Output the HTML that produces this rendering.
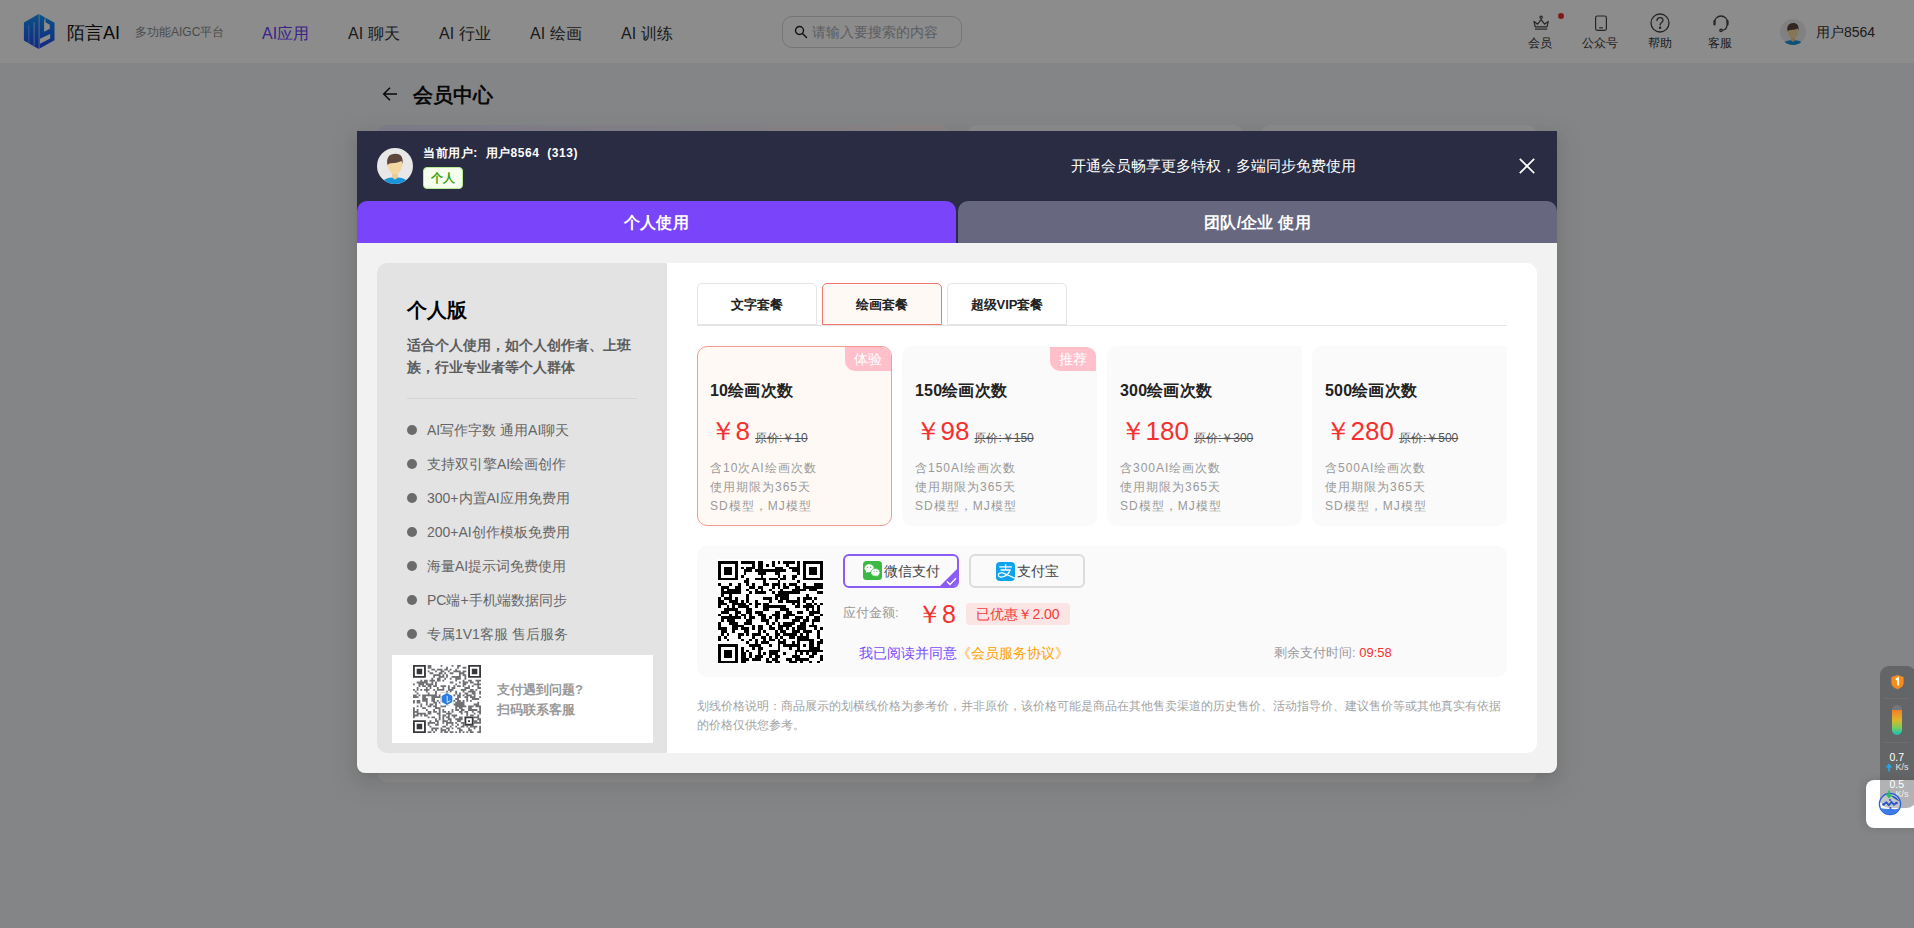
<!DOCTYPE html>
<html lang="zh">
<head>
<meta charset="utf-8">
<title>会员中心</title>
<style>
*{box-sizing:border-box;margin:0;padding:0}
html,body{width:1914px;height:928px;overflow:hidden}
body{font-family:"Liberation Sans",sans-serif;background:#f0f2f5;position:relative;color:#222}
.abs{position:absolute}
/* ---------- page (under overlay) ---------- */
#hdr{position:absolute;left:0;top:0;width:1914px;height:63px;background:#fff}
#hdr .t{position:absolute;white-space:nowrap;line-height:1}
#overlay{position:absolute;left:0;top:0;width:1914px;height:928px;background:rgba(0,0,0,.45)}
.bgcard{position:absolute;background:#fff;border-radius:10px}
/* ---------- modal ---------- */
#modal{position:absolute;left:357px;top:131px;width:1200px;height:642px;background:#f2f2f2;border-radius:0 0 8px 8px;overflow:hidden;box-shadow:0 3px 6px -4px rgba(0,0,0,.12),0 6px 16px 0 rgba(0,0,0,.08),0 9px 28px 8px rgba(0,0,0,.05)}
#mh{position:absolute;left:0;top:0;width:1200px;height:112px;background:#292c42}
.tab{position:absolute;top:70px;height:42px;border-radius:10px 10px 0 0;color:#fff;font-weight:bold;font-size:16px;text-align:center;line-height:43px;letter-spacing:.2px}
#left{position:absolute;left:20px;top:132px;width:290px;height:490px;background:#e3e3e3;border-radius:10px 0 0 10px}
#right{position:absolute;left:310px;top:132px;width:870px;height:490px;background:#fff;border-radius:0 10px 10px 0}
.li{position:absolute;left:30px;font-size:14px;color:#666;white-space:nowrap;line-height:20px;padding-left:20px}
.li:before{content:"";position:absolute;left:0;top:5px;width:10px;height:10px;border-radius:50%;background:#6b6b6b}
.ptab{position:absolute;top:20px;width:120px;height:42px;border:1px solid #e4e4e4;border-radius:5px 5px 0 0;font-size:13px;font-weight:bold;color:#222;text-align:center;line-height:41px;background:#fff}
.card{position:absolute;top:83px;width:195px;height:180px;border-radius:10px;background:#fafafa;overflow:hidden;border:1px solid transparent;background-clip:border-box}
.card .ti{position:absolute;left:12px;top:32.500px;letter-spacing:.2px;font-size:16px;font-weight:bold;color:#222;line-height:22px;white-space:nowrap}
.card .pr{position:absolute;left:11.500px;top:65px;font-size:26px;color:#f5302e;line-height:38px;white-space:nowrap}
.card .op{font-size:12px;color:#555;text-decoration:line-through;margin-left:5px;position:relative;top:2px}
.card .ds{position:absolute;left:12px;top:112px;font-size:12px;color:#999;line-height:19px;letter-spacing:1px;white-space:nowrap}
.badge{position:absolute;right:0;top:0;width:46px;height:24px;background:#ffc0cb;color:#fff;font-size:14px;text-align:center;line-height:24px;border-radius:0 9px 0 10px}
</style>
</head>
<body>
<!-- ================= HEADER ================= -->
<div id="hdr">
  <svg class="abs" style="left:23px;top:13px" width="32" height="37" viewBox="0 0 32 37">
    <defs><linearGradient id="lg" x1="0" y1="0" x2="0" y2="1"><stop offset="0" stop-color="#1795f5"/><stop offset="1" stop-color="#2148ee"/></linearGradient></defs>
    <path d="M15.700 .9L31.500 9.700V27.300L15.700 36.100L.9 27.600V9.500Z" fill="url(#lg)"/>
    <path d="M5.850 12v18.200" stroke="#fff" stroke-opacity=".55" stroke-width=".7" fill="none"/>
    <path d="M11.100 9.200v23.500" stroke="#fff" stroke-opacity=".6" stroke-width="1" fill="none"/>
    <path d="M16.100 .9v35.200" stroke="#fff" stroke-opacity=".75" stroke-width=".8" fill="none"/>
    <path d="M21.900 4.600h.6v4.700l4.300 2.500v3.900l-5.700 3V9z" fill="#fff"/>
    <path d="M17 25.800L27.100 20.900V25.500L17 30.700Z" fill="#fff"/>
  </svg>
  <div class="t" style="left:67px;top:24px;font-size:18px;color:#111;font-weight:500">陌言AI</div>
  <div class="t" style="left:135px;top:26px;font-size:12px;color:#888">多功能AIGC平台</div>
  <div class="t" style="left:262px;top:26px;font-size:16px;color:#6c3ff5">AI应用</div>
  <div class="t" style="left:348px;top:26px;font-size:16px;color:#333">AI 聊天</div>
  <div class="t" style="left:439px;top:26px;font-size:16px;color:#333">AI 行业</div>
  <div class="t" style="left:530px;top:26px;font-size:16px;color:#333">AI 绘画</div>
  <div class="t" style="left:621px;top:26px;font-size:16px;color:#333">AI 训练</div>
  <div class="abs" style="left:782px;top:16px;width:180px;height:32px;border:1px solid #d6d6d6;border-radius:10px;background:#fff"></div>
  <svg class="abs" style="left:794px;top:25px" width="14" height="14" viewBox="0 0 14 14"><circle cx="5.500" cy="5.500" r="4" stroke="#222" stroke-width="1.400" fill="none"/><path d="M8.500 8.500L12.500 12.500" stroke="#222" stroke-width="1.500" stroke-linecap="round"/></svg>
  <div class="t" style="left:812px;top:25px;font-size:14px;color:#a8abb2">请输入要搜索的内容</div>
  <!-- right icons -->
  <svg class="abs" style="left:1530.500px;top:14px" width="20" height="20" viewBox="0 0 20 20" fill="none" stroke="#444" stroke-width="1.200"><circle cx="10.100" cy="3.300" r="1.200"/><path d="M3 7.400l3.600 2.800 3.500-4.600 3.500 4.600 3.600-2.800-1.200 5.500H4.200z" stroke-linejoin="round"/><path d="M4 15.100h12.200"/></svg>
  <div class="abs" style="left:1558px;top:13px;width:6px;height:6px;border-radius:50%;background:#f02d2d"></div>
  <div class="t" style="left:1528px;top:37px;font-size:12px;color:#333">会员</div>
  <svg class="abs" style="left:1590.500px;top:14px" width="20" height="20" viewBox="0 0 20 20" fill="none" stroke="#444" stroke-width="1.200"><rect x="4.600" y="2" width="10.800" height="14.400" rx="1.800"/><path d="M8.200 13.800h3.600"/></svg>
  <div class="t" style="left:1582px;top:37px;font-size:12px;color:#333">公众号</div>
  <svg class="abs" style="left:1649px;top:12px" width="22" height="22" viewBox="0 0 22 22" fill="none" stroke="#444" stroke-width="1.3"><circle cx="11" cy="11" r="9"/><path d="M8 8.6c0-1.8 1.3-3 3-3s3 1.1 3 2.7c0 2.2-2.9 2.3-2.9 4.7" stroke-linecap="round"/><circle cx="11.1" cy="15.8" r=".6" fill="#444"/></svg>
  <div class="t" style="left:1648px;top:37px;font-size:12px;color:#333">帮助</div>
  <svg class="abs" style="left:1710px;top:12px" width="22" height="22" viewBox="0 0 22 22" fill="none" stroke="#444" stroke-width="1.3"><path d="M4.5 10.5a6.5 6.5 0 0 1 13 0" /><path d="M4.5 9v3.5M17.500 9v3.500" stroke-width="2.2" stroke-linecap="round"/><path d="M17 13c0 3-2 5-5 5.300"/><circle cx="11" cy="18.300" r="1.2"/></svg>
  <div class="t" style="left:1708px;top:37px;font-size:12px;color:#333">客服</div>
  <svg class="abs" style="left:1780px;top:19px" width="26" height="26" viewBox="0 0 36 36"><defs><clipPath id="c1"><circle cx="18" cy="18" r="18"/></clipPath></defs><g clip-path="url(#c1)"><rect width="36" height="36" fill="#ebebeb"/><path d="M5 36c.5-5 5-6.500 13-6.500s12.500 1.500 13 6.500z" fill="#1b93d8"/><path d="M15.200 23h5.600v6.500l-2.800 2.200-2.800-2.200z" fill="#ecc98e"/><path d="M11 15.500c-1.200 0-1.300 3.200.3 3.500.5 4.500 3.500 7.500 6.700 7.500s6.200-3 6.700-7.500c1.600-.3 1.500-3.500.3-3.500-.2-5-2.500-6.500-7-6.500s-6.800 1.500-7 6.500z" fill="#f2d7a0"/><path d="M10.500 17c-1.500-7.600 1.900-11.300 8-11.300 4.800 0 8 2.600 7.100 10.600-.3-1.600-.7-2.500-1.300-3.200-4.300 2.300-9.300 1.900-11.800 2.400-.9.400-1.500.8-2 1.500z" fill="#5c463e"/></g></svg>
  <div class="t" style="left:1816px;top:25px;font-size:14px;color:#333">用户8564</div>
</div>
<!-- page content under overlay -->
<svg class="abs" style="left:381px;top:86px" width="18" height="16" viewBox="0 0 18 16" fill="none" stroke="#111" stroke-width="1.5"><path d="M16 8H2.700M9 1.700L2.700 8 9 14.300"/></svg>
<div class="abs" style="left:413px;top:83px;font-size:20px;font-weight:bold;color:#111;line-height:24px;white-space:nowrap">会员中心</div>
<div class="bgcard" style="left:377px;top:125px;width:572px;height:300px;background:linear-gradient(90deg,#e9e3ff,#f3eefb 55%,#fff3f2)"></div>
<div class="bgcard" style="left:967px;top:125px;width:276px;height:300px"></div>
<div class="bgcard" style="left:1261px;top:125px;width:276px;height:300px"></div>
<div class="bgcard" style="left:377px;top:500px;width:1160px;height:282px"></div>
<div id="overlay"></div>

<!-- ================= MODAL ================= -->
<div id="modal">
  <div id="mh"></div>
  <svg class="abs" style="left:20px;top:17px" width="36" height="36" viewBox="0 0 36 36"><defs><clipPath id="c2"><circle cx="18" cy="18" r="18"/></clipPath></defs><g clip-path="url(#c2)"><rect width="36" height="36" fill="#e8e8e8"/><path d="M5 36c.5-5 5-6.500 13-6.500s12.500 1.500 13 6.500z" fill="#1b93d8"/><path d="M15.200 23h5.600v6.500l-2.800 2.200-2.800-2.200z" fill="#ecc98e"/><path d="M11 15.500c-1.200 0-1.300 3.200.3 3.500.5 4.500 3.500 7.500 6.700 7.500s6.200-3 6.700-7.500c1.600-.3 1.500-3.500.3-3.500-.2-5-2.500-6.500-7-6.500s-6.800 1.500-7 6.500z" fill="#f2d7a0"/><path d="M10.500 17c-1.500-7.600 1.900-11.300 8-11.300 4.800 0 8 2.600 7.100 10.600-.3-1.600-.7-2.500-1.300-3.200-4.300 2.300-9.300 1.900-11.800 2.400-.9.400-1.500.8-2 1.500z" fill="#5c463e"/></g></svg>
  <div class="abs" style="left:66px;top:13px;font-size:12px;font-weight:bold;color:#fff;line-height:18px;white-space:nowrap;letter-spacing:.55px">当前用户:&nbsp; 用户8564&nbsp; (313)</div>
  <div class="abs" style="left:66px;top:36px;width:40px;height:22px;border:1px solid #b7eb8f;background:#f6ffed;border-radius:4px;color:#389e0d;font-size:12px;font-weight:bold;text-align:center;line-height:20px">个人</div>
  <div class="abs" style="left:714px;top:25px;font-size:15px;color:#fff;line-height:20px;white-space:nowrap">开通会员畅享更多特权，多端同步免费使用</div>
  <svg class="abs" style="left:1162px;top:27px" width="16" height="16" viewBox="0 0 16 16" stroke="#fff" stroke-width="1.700" fill="none"><path d="M.8 .8l14.400 14.400M15.200 .8L.8 15.200"/></svg>
  <div class="tab" style="left:0;width:599px;background:#7a45fa">个人使用</div>
  <div class="tab" style="left:601px;width:599px;background:#67687f">团队/企业 使用</div>

  <!-- left panel -->
  <div id="left">
    <div class="abs" style="left:30px;top:33px;font-size:20px;font-weight:bold;color:#000;line-height:28px">个人版</div>
    <div class="abs" style="left:30px;top:71px;width:232px;font-size:14px;font-weight:bold;color:#5c5c5c;line-height:22px">适合个人使用，如个人创作者、上班族，行业专业者等个人群体</div>
    <div class="abs" style="left:30px;top:135px;width:230px;height:1px;background:#d4d4d4"></div>
    <div class="li" style="top:157px">AI写作字数 通用AI聊天</div>
    <div class="li" style="top:191px">支持双引擎AI绘画创作</div>
    <div class="li" style="top:225px">300+内置AI应用免费用</div>
    <div class="li" style="top:259px">200+AI创作模板免费用</div>
    <div class="li" style="top:293px">海量AI提示词免费使用</div>
    <div class="li" style="top:327px">PC端+手机端数据同步</div>
    <div class="li" style="top:361px">专属1V1客服 售后服务</div>
    <div class="abs" style="left:15px;top:392px;width:261px;height:88px;background:#fff"></div>
    <svg class="abs" style="left:36px;top:402px" width="68" height="68" viewBox="0 0 37 37"><path d="M0 0h7v1h-7zM30 0h7v1h-7zM0 1h1v1h-1zM6 1h1v1h-1zM30 1h1v1h-1zM36 1h1v1h-1zM0 2h1v1h-1zM2 2h3v1h-3zM6 2h1v1h-1zM30 2h1v1h-1zM32 2h3v1h-3zM36 2h1v1h-1zM0 3h1v1h-1zM2 3h3v1h-3zM6 3h1v1h-1zM30 3h1v1h-1zM32 3h3v1h-3zM36 3h1v1h-1zM0 4h1v1h-1zM2 4h3v1h-3zM6 4h1v1h-1zM30 4h1v1h-1zM32 4h3v1h-3zM36 4h1v1h-1zM0 5h1v1h-1zM6 5h1v1h-1zM30 5h1v1h-1zM36 5h1v1h-1zM0 6h7v1h-7zM30 6h7v1h-7zM28 28h5v1h-5zM28 29h1v1h-1zM32 29h1v1h-1zM0 30h7v1h-7zM28 30h1v1h-1zM30 30h1v1h-1zM32 30h1v1h-1zM0 31h1v1h-1zM6 31h1v1h-1zM28 31h1v1h-1zM32 31h1v1h-1zM0 32h1v1h-1zM2 32h3v1h-3zM6 32h1v1h-1zM28 32h5v1h-5zM0 33h1v1h-1zM2 33h3v1h-3zM6 33h1v1h-1zM0 34h1v1h-1zM2 34h3v1h-3zM6 34h1v1h-1zM0 35h1v1h-1zM6 35h1v1h-1zM0 36h7v1h-7z" fill="#38383c"/><path d="M8 0h2v1h-2zM15 0h1v1h-1zM21 0h1v1h-1zM24 0h2v1h-2zM8 1h2v1h-2zM18 1h1v1h-1zM24 1h1v1h-1zM27 1h2v1h-2zM10 2h2v1h-2zM13 2h3v1h-3zM17 2h2v1h-2zM20 2h1v1h-1zM23 2h1v1h-1zM8 3h1v1h-1zM12 3h1v1h-1zM15 3h2v1h-2zM19 3h1v1h-1zM22 3h4v1h-4zM27 3h2v1h-2zM9 4h2v1h-2zM14 4h2v1h-2zM17 4h1v1h-1zM20 4h2v1h-2zM25 4h3v1h-3zM11 5h4v1h-4zM16 5h1v1h-1zM18 5h1v1h-1zM25 5h1v1h-1zM27 5h2v1h-2zM11 6h1v1h-1zM14 6h3v1h-3zM18 6h1v1h-1zM21 6h5v1h-5zM28 6h1v1h-1zM10 7h1v1h-1zM13 7h2v1h-2zM17 7h1v1h-1zM20 7h1v1h-1zM23 7h3v1h-3zM28 7h1v1h-1zM4 8h1v1h-1zM6 8h2v1h-2zM9 8h3v1h-3zM13 8h2v1h-2zM16 8h1v1h-1zM23 8h1v1h-1zM27 8h1v1h-1zM30 8h2v1h-2zM34 8h3v1h-3zM2 9h6v1h-6zM10 9h1v1h-1zM12 9h1v1h-1zM20 9h2v1h-2zM25 9h1v1h-1zM27 9h3v1h-3zM31 9h2v1h-2zM35 9h1v1h-1zM0 10h1v1h-1zM3 10h3v1h-3zM7 10h4v1h-4zM12 10h1v1h-1zM23 10h1v1h-1zM27 10h2v1h-2zM33 10h4v1h-4zM3 11h1v1h-1zM5 11h2v1h-2zM8 11h2v1h-2zM11 11h2v1h-2zM15 11h3v1h-3zM19 11h1v1h-1zM22 11h1v1h-1zM24 11h2v1h-2zM27 11h1v1h-1zM30 11h1v1h-1zM32 11h1v1h-1zM35 11h1v1h-1zM2 12h1v1h-1zM7 12h1v1h-1zM9 12h1v1h-1zM13 12h1v1h-1zM16 12h1v1h-1zM19 12h1v1h-1zM21 12h2v1h-2zM28 12h3v1h-3zM35 12h2v1h-2zM0 13h1v1h-1zM2 13h1v1h-1zM4 13h1v1h-1zM6 13h3v1h-3zM11 13h1v1h-1zM13 13h4v1h-4zM19 13h3v1h-3zM26 13h3v1h-3zM31 13h2v1h-2zM34 13h1v1h-1zM1 14h1v1h-1zM7 14h1v1h-1zM12 14h1v1h-1zM18 14h1v1h-1zM20 14h1v1h-1zM23 14h1v1h-1zM27 14h1v1h-1zM30 14h4v1h-4zM36 14h1v1h-1zM2 15h1v1h-1zM8 15h1v1h-1zM12 15h1v1h-1zM15 15h5v1h-5zM23 15h1v1h-1zM25 15h1v1h-1zM28 15h2v1h-2zM32 15h2v1h-2zM36 15h1v1h-1zM0 16h2v1h-2zM3 16h1v1h-1zM5 16h8v1h-8zM14 16h4v1h-4zM19 16h4v1h-4zM24 16h2v1h-2zM27 16h1v1h-1zM29 16h3v1h-3zM33 16h1v1h-1zM0 17h3v1h-3zM5 17h2v1h-2zM10 17h6v1h-6zM18 17h1v1h-1zM24 17h2v1h-2zM28 17h2v1h-2zM31 17h3v1h-3zM36 17h1v1h-1zM5 18h3v1h-3zM10 18h2v1h-2zM15 18h1v1h-1zM17 18h1v1h-1zM19 18h1v1h-1zM23 18h2v1h-2zM29 18h1v1h-1zM32 18h4v1h-4zM0 19h1v1h-1zM2 19h2v1h-2zM5 19h3v1h-3zM10 19h2v1h-2zM13 19h1v1h-1zM15 19h1v1h-1zM20 19h3v1h-3zM24 19h2v1h-2zM27 19h1v1h-1zM29 19h1v1h-1zM31 19h1v1h-1zM0 20h1v1h-1zM2 20h2v1h-2zM7 20h1v1h-1zM11 20h2v1h-2zM14 20h1v1h-1zM17 20h1v1h-1zM20 20h2v1h-2zM23 20h5v1h-5zM35 20h1v1h-1zM4 21h1v1h-1zM7 21h1v1h-1zM9 21h2v1h-2zM12 21h1v1h-1zM15 21h1v1h-1zM17 21h3v1h-3zM22 21h6v1h-6zM33 21h3v1h-3zM2 22h1v1h-1zM4 22h1v1h-1zM8 22h2v1h-2zM11 22h2v1h-2zM15 22h3v1h-3zM23 22h6v1h-6zM30 22h3v1h-3zM34 22h3v1h-3zM0 23h1v1h-1zM5 23h2v1h-2zM12 23h3v1h-3zM23 23h1v1h-1zM25 23h2v1h-2zM30 23h2v1h-2zM36 23h1v1h-1zM0 24h1v1h-1zM2 24h1v1h-1zM7 24h1v1h-1zM11 24h1v1h-1zM14 24h1v1h-1zM16 24h1v1h-1zM21 24h1v1h-1zM23 24h2v1h-2zM26 24h2v1h-2zM30 24h5v1h-5zM36 24h1v1h-1zM0 25h3v1h-3zM8 25h2v1h-2zM11 25h2v1h-2zM14 25h1v1h-1zM16 25h2v1h-2zM19 25h1v1h-1zM21 25h1v1h-1zM25 25h2v1h-2zM28 25h2v1h-2zM32 25h1v1h-1zM35 25h2v1h-2zM0 26h1v1h-1zM2 26h5v1h-5zM8 26h2v1h-2zM13 26h2v1h-2zM18 26h3v1h-3zM26 26h1v1h-1zM29 26h1v1h-1zM33 26h1v1h-1zM36 26h1v1h-1zM0 27h3v1h-3zM4 27h1v1h-1zM6 27h2v1h-2zM14 27h1v1h-1zM16 27h2v1h-2zM19 27h1v1h-1zM21 27h3v1h-3zM29 27h1v1h-1zM31 27h2v1h-2zM35 27h1v1h-1zM0 28h1v1h-1zM8 28h1v1h-1zM10 28h2v1h-2zM14 28h1v1h-1zM16 28h1v1h-1zM18 28h2v1h-2zM22 28h1v1h-1zM25 28h2v1h-2zM33 28h3v1h-3zM12 29h1v1h-1zM14 29h1v1h-1zM16 29h1v1h-1zM19 29h2v1h-2zM23 29h4v1h-4zM35 29h2v1h-2zM9 30h1v1h-1zM12 30h2v1h-2zM16 30h3v1h-3zM20 30h1v1h-1zM24 30h2v1h-2zM33 30h2v1h-2zM36 30h1v1h-1zM8 31h4v1h-4zM13 31h1v1h-1zM16 31h1v1h-1zM18 31h4v1h-4zM23 31h1v1h-1zM26 31h2v1h-2zM33 31h4v1h-4zM8 32h1v1h-1zM12 32h2v1h-2zM18 32h1v1h-1zM21 32h1v1h-1zM24 32h1v1h-1zM27 32h1v1h-1zM9 33h1v1h-1zM16 33h2v1h-2zM20 33h1v1h-1zM23 33h1v1h-1zM26 33h2v1h-2zM29 33h1v1h-1zM31 33h4v1h-4zM36 33h1v1h-1zM10 34h4v1h-4zM15 34h1v1h-1zM18 34h2v1h-2zM21 34h1v1h-1zM24 34h2v1h-2zM30 34h1v1h-1zM33 34h1v1h-1zM36 34h1v1h-1zM10 35h1v1h-1zM12 35h1v1h-1zM15 35h3v1h-3zM19 35h1v1h-1zM25 35h2v1h-2zM30 35h2v1h-2zM36 35h1v1h-1zM8 36h2v1h-2zM11 36h1v1h-1zM15 36h1v1h-1zM17 36h2v1h-2zM20 36h2v1h-2zM23 36h1v1h-1zM25 36h1v1h-1zM27 36h1v1h-1zM29 36h1v1h-1zM31 36h2v1h-2zM35 36h2v1h-2z" fill="#707074"/><rect x="15" y="15" width="7" height="7" fill="#fff"/><path d="M18.500 15.200l2.900 1.650v3.300l-2.900 1.650-2.900-1.650v-3.300z" fill="#2b7de0"/><path d="M18.600 16.800v3.600l1.700-1" stroke="#fff" stroke-width=".45" fill="none"/></svg>
    <div class="abs" style="left:120px;top:417px;font-size:13px;font-weight:bold;color:#999;line-height:20px;white-space:nowrap">支付遇到问题?<br>扫码联系客服</div>
  </div>

  <!-- right panel -->
  <div id="right">
    <div class="abs" style="left:30px;top:62px;width:810px;height:1px;background:#e4e4e4"></div>
    <div class="ptab" style="left:30px">文字套餐</div>
    <div class="ptab" style="left:155px;border-color:#f0776e;background:#fff9f5">绘画套餐</div>
    <div class="ptab" style="left:280px">超级VIP套餐</div>

    <div class="card" style="left:30px;background:#fff9f5;border:1px solid #f79a92">
      <div class="badge">体验</div>
      <div class="ti">10绘画次数</div>
      <div class="pr">￥8<span class="op">原价:￥10</span></div>
      <div class="ds">含10次AI绘画次数<br>使用期限为365天<br>SD模型，MJ模型</div>
    </div>
    <div class="card" style="left:235px">
      <div class="badge">推荐</div>
      <div class="ti">150绘画次数</div>
      <div class="pr">￥98<span class="op">原价:￥150</span></div>
      <div class="ds">含150AI绘画次数<br>使用期限为365天<br>SD模型，MJ模型</div>
    </div>
    <div class="card" style="left:440px;border-radius:10px 0 10px 10px">
      <div class="ti">300绘画次数</div>
      <div class="pr">￥180<span class="op">原价:￥300</span></div>
      <div class="ds">含300AI绘画次数<br>使用期限为365天<br>SD模型，MJ模型</div>
    </div>
    <div class="card" style="left:645px;border-radius:10px 0 10px 10px">
      <div class="ti">500绘画次数</div>
      <div class="pr">￥280<span class="op">原价:￥500</span></div>
      <div class="ds">含500AI绘画次数<br>使用期限为365天<br>SD模型，MJ模型</div>
    </div>

    <!-- payment box -->
    <div class="abs" style="left:30px;top:283px;width:810px;height:131px;background:#fafafa;border-radius:10px"></div>
    <div class="abs" style="left:50px;top:296px;width:107px;height:105px;background:#fff"></div>
    <svg class="abs" style="left:51px;top:297.500px" width="105" height="102.500" viewBox="0 0 37 37" preserveAspectRatio="none" shape-rendering="crispEdges"><path d="M0 0h7v1h-7zM30 0h7v1h-7zM0 1h1v1h-1zM6 1h1v1h-1zM30 1h1v1h-1zM36 1h1v1h-1zM0 2h1v1h-1zM2 2h3v1h-3zM6 2h1v1h-1zM30 2h1v1h-1zM32 2h3v1h-3zM36 2h1v1h-1zM0 3h1v1h-1zM2 3h3v1h-3zM6 3h1v1h-1zM30 3h1v1h-1zM32 3h3v1h-3zM36 3h1v1h-1zM0 4h1v1h-1zM2 4h3v1h-3zM6 4h1v1h-1zM30 4h1v1h-1zM32 4h3v1h-3zM36 4h1v1h-1zM0 5h1v1h-1zM6 5h1v1h-1zM30 5h1v1h-1zM36 5h1v1h-1zM0 6h7v1h-7zM30 6h7v1h-7zM28 28h5v1h-5zM28 29h1v1h-1zM32 29h1v1h-1zM0 30h7v1h-7zM28 30h1v1h-1zM30 30h1v1h-1zM32 30h1v1h-1zM0 31h1v1h-1zM6 31h1v1h-1zM28 31h1v1h-1zM32 31h1v1h-1zM0 32h1v1h-1zM2 32h3v1h-3zM6 32h1v1h-1zM28 32h5v1h-5zM0 33h1v1h-1zM2 33h3v1h-3zM6 33h1v1h-1zM0 34h1v1h-1zM2 34h3v1h-3zM6 34h1v1h-1zM0 35h1v1h-1zM6 35h1v1h-1zM0 36h7v1h-7zM8 0h5v1h-5zM14 0h2v1h-2zM19 0h1v1h-1zM21 0h1v1h-1zM23 0h4v1h-4zM28 0h1v1h-1zM12 1h1v1h-1zM14 1h2v1h-2zM17 1h1v1h-1zM19 1h1v1h-1zM24 1h1v1h-1zM28 1h1v1h-1zM8 2h1v1h-1zM10 2h3v1h-3zM14 2h2v1h-2zM20 2h3v1h-3zM25 2h4v1h-4zM9 3h3v1h-3zM13 3h11v1h-11zM26 3h3v1h-3zM9 4h1v1h-1zM14 4h3v1h-3zM20 4h2v1h-2zM28 4h1v1h-1zM8 5h1v1h-1zM15 5h1v1h-1zM21 5h1v1h-1zM23 5h1v1h-1zM26 5h2v1h-2zM10 6h1v1h-1zM13 6h4v1h-4zM18 6h3v1h-3zM22 6h2v1h-2zM26 6h1v1h-1zM9 7h2v1h-2zM16 7h1v1h-1zM21 7h1v1h-1zM28 7h1v1h-1zM0 8h1v1h-1zM4 8h1v1h-1zM7 8h1v1h-1zM10 8h1v1h-1zM12 8h1v1h-1zM16 8h2v1h-2zM19 8h3v1h-3zM23 8h1v1h-1zM25 8h3v1h-3zM30 8h1v1h-1zM34 8h3v1h-3zM1 9h3v1h-3zM6 9h2v1h-2zM11 9h2v1h-2zM14 9h2v1h-2zM19 9h1v1h-1zM21 9h1v1h-1zM23 9h2v1h-2zM27 9h2v1h-2zM30 9h7v1h-7zM1 10h1v1h-1zM3 10h5v1h-5zM10 10h1v1h-1zM13 10h1v1h-1zM15 10h1v1h-1zM18 10h1v1h-1zM22 10h1v1h-1zM26 10h5v1h-5zM32 10h3v1h-3zM1 11h7v1h-7zM11 11h1v1h-1zM13 11h4v1h-4zM19 11h1v1h-1zM21 11h8v1h-8zM35 11h2v1h-2zM1 12h1v1h-1zM4 12h1v1h-1zM10 12h1v1h-1zM20 12h5v1h-5zM31 12h1v1h-1zM0 13h1v1h-1zM2 13h3v1h-3zM6 13h1v1h-1zM10 13h1v1h-1zM16 13h3v1h-3zM20 13h1v1h-1zM22 13h3v1h-3zM28 13h1v1h-1zM30 13h3v1h-3zM34 13h1v1h-1zM0 14h2v1h-2zM4 14h3v1h-3zM8 14h1v1h-1zM10 14h1v1h-1zM13 14h1v1h-1zM18 14h1v1h-1zM21 14h2v1h-2zM24 14h5v1h-5zM30 14h1v1h-1zM33 14h1v1h-1zM0 15h3v1h-3zM5 15h5v1h-5zM11 15h1v1h-1zM13 15h2v1h-2zM16 15h2v1h-2zM26 15h1v1h-1zM28 15h1v1h-1zM31 15h2v1h-2zM34 15h1v1h-1zM36 15h1v1h-1zM0 16h1v1h-1zM3 16h1v1h-1zM5 16h1v1h-1zM7 16h4v1h-4zM13 16h1v1h-1zM16 16h8v1h-8zM27 16h2v1h-2zM30 16h4v1h-4zM35 16h1v1h-1zM2 17h5v1h-5zM10 17h2v1h-2zM16 17h2v1h-2zM22 17h3v1h-3zM31 17h1v1h-1zM33 17h1v1h-1zM35 17h1v1h-1zM1 18h3v1h-3zM6 18h2v1h-2zM10 18h2v1h-2zM13 18h3v1h-3zM20 18h2v1h-2zM24 18h2v1h-2zM28 18h2v1h-2zM32 18h4v1h-4zM0 19h1v1h-1zM4 19h1v1h-1zM6 19h1v1h-1zM8 19h2v1h-2zM11 19h1v1h-1zM14 19h3v1h-3zM19 19h3v1h-3zM23 19h4v1h-4zM32 19h2v1h-2zM36 19h1v1h-1zM1 20h7v1h-7zM9 20h1v1h-1zM11 20h2v1h-2zM15 20h2v1h-2zM18 20h1v1h-1zM20 20h2v1h-2zM23 20h2v1h-2zM27 20h3v1h-3zM31 20h1v1h-1zM34 20h2v1h-2zM1 21h1v1h-1zM3 21h3v1h-3zM10 21h2v1h-2zM15 21h3v1h-3zM20 21h1v1h-1zM26 21h3v1h-3zM30 21h2v1h-2zM33 21h3v1h-3zM0 22h1v1h-1zM4 22h3v1h-3zM9 22h3v1h-3zM17 22h1v1h-1zM19 22h1v1h-1zM21 22h1v1h-1zM23 22h4v1h-4zM29 22h2v1h-2zM33 22h1v1h-1zM0 23h1v1h-1zM5 23h4v1h-4zM12 23h1v1h-1zM14 23h2v1h-2zM18 23h1v1h-1zM21 23h5v1h-5zM28 23h3v1h-3zM32 23h3v1h-3zM0 24h3v1h-3zM5 24h2v1h-2zM8 24h3v1h-3zM12 24h1v1h-1zM14 24h2v1h-2zM18 24h2v1h-2zM21 24h2v1h-2zM24 24h1v1h-1zM26 24h1v1h-1zM28 24h3v1h-3zM34 24h1v1h-1zM36 24h1v1h-1zM1 25h2v1h-2zM5 25h1v1h-1zM9 25h2v1h-2zM14 25h1v1h-1zM16 25h1v1h-1zM20 25h1v1h-1zM22 25h2v1h-2zM26 25h3v1h-3zM30 25h3v1h-3zM35 25h1v1h-1zM1 26h1v1h-1zM3 26h1v1h-1zM7 26h2v1h-2zM10 26h1v1h-1zM12 26h3v1h-3zM17 26h1v1h-1zM20 26h2v1h-2zM23 26h5v1h-5zM29 26h1v1h-1zM31 26h1v1h-1zM35 26h1v1h-1zM0 27h1v1h-1zM2 27h1v1h-1zM7 27h1v1h-1zM12 27h1v1h-1zM15 27h2v1h-2zM18 27h1v1h-1zM20 27h1v1h-1zM22 27h1v1h-1zM25 27h2v1h-2zM28 27h4v1h-4zM35 27h1v1h-1zM0 28h1v1h-1zM3 28h1v1h-1zM8 28h1v1h-1zM11 28h1v1h-1zM13 28h1v1h-1zM16 28h1v1h-1zM18 28h2v1h-2zM21 28h1v1h-1zM23 28h1v1h-1zM33 28h1v1h-1zM36 28h1v1h-1zM10 29h1v1h-1zM13 29h1v1h-1zM15 29h3v1h-3zM21 29h3v1h-3zM26 29h1v1h-1zM33 29h1v1h-1zM35 29h2v1h-2zM11 30h4v1h-4zM18 30h1v1h-1zM21 30h1v1h-1zM23 30h5v1h-5zM33 30h1v1h-1zM35 30h1v1h-1zM8 31h1v1h-1zM12 31h1v1h-1zM14 31h2v1h-2zM21 31h1v1h-1zM25 31h1v1h-1zM33 31h3v1h-3zM8 32h1v1h-1zM10 32h1v1h-1zM14 32h1v1h-1zM18 32h4v1h-4zM27 32h1v1h-1zM33 32h4v1h-4zM8 33h2v1h-2zM11 33h1v1h-1zM14 33h1v1h-1zM16 33h1v1h-1zM18 33h3v1h-3zM23 33h1v1h-1zM27 33h1v1h-1zM29 33h1v1h-1zM31 33h1v1h-1zM33 33h2v1h-2zM8 34h2v1h-2zM11 34h1v1h-1zM13 34h3v1h-3zM18 34h1v1h-1zM20 34h2v1h-2zM26 34h3v1h-3zM32 34h2v1h-2zM36 34h1v1h-1zM8 35h3v1h-3zM12 35h3v1h-3zM17 35h1v1h-1zM19 35h2v1h-2zM24 35h2v1h-2zM27 35h5v1h-5zM36 35h1v1h-1zM8 36h2v1h-2zM17 36h2v1h-2zM20 36h2v1h-2zM25 36h3v1h-3zM29 36h1v1h-1zM32 36h1v1h-1zM35 36h1v1h-1z" fill="#000"/></svg>
    <div class="abs" style="left:176px;top:291px;width:116px;height:34px;border:2px solid #8a5cf5;border-radius:6px;overflow:hidden;background:#fafafa">
      <div class="abs" style="right:-2px;bottom:-2px;width:0;height:0;border-style:solid;border-width:0 0 21px 21px;border-color:transparent transparent #8a5cf5 transparent"></div>
      <svg class="abs" style="right:0px;bottom:0px" width="11" height="9" viewBox="0 0 11 9" fill="none" stroke="#fff" stroke-width="1.400"><path d="M1 4.500l3 3L10 1.200"/></svg>
    </div>
    <svg class="abs" style="left:196px;top:298px" width="19" height="19" viewBox="0 0 19 19"><rect width="19" height="19" rx="3.500" fill="#3cb944"/><path d="M6.200 3.300c-2.600 0-4.700 1.800-4.700 4 0 1.300.7 2.400 1.800 3.100l-.5 1.600 1.900-1c.5.100 1 .2 1.500.2 2.600 0 4.700-1.700 4.700-3.900s-2.100-4-4.700-4z" fill="#fff"/><path d="M12.400 7.600c-2.500 0-4.500 1.700-4.500 3.800s2 3.800 4.500 3.800c.5 0 1-.1 1.400-.2l1.700.9-.4-1.400c1.100-.7 1.800-1.800 1.800-3.100 0-2.100-2-3.800-4.500-3.800z" fill="#fff" stroke="#3cb944" stroke-width=".7"/><circle cx="4.600" cy="6.300" r=".65" fill="#3cb944"/><circle cx="7.700" cy="6.300" r=".65" fill="#3cb944"/><circle cx="11" cy="10.500" r=".6" fill="#3cb944"/><circle cx="13.800" cy="10.500" r=".6" fill="#3cb944"/></svg>
    <div class="abs" style="left:217px;top:298px;font-size:14px;color:#444;line-height:20px;white-space:nowrap">微信支付</div>
    <div class="abs" style="left:302px;top:291px;width:116px;height:34px;border:2px solid #dcdcdc;border-radius:6px;background:#fafafa"></div>
    <svg class="abs" style="left:329px;top:298.500px" width="19" height="19" viewBox="0 0 19 19"><defs><clipPath id="ca"><rect width="19" height="19" rx="4"/></clipPath></defs><g clip-path="url(#ca)"><rect width="19" height="19" fill="#0ea3ec"/><path d="M3.300 4.900h12.600M9.600 2.300v5.500M4.600 8h10" stroke="#fff" stroke-width="1.300" fill="none"/><path d="M14 8c-.9 3-3.200 5.600-6.400 6.700-2.400.8-5 .3-5.200-1.500-.2-1.700 1.700-2.700 3.900-2.300 3 .6 7.800 3.400 13.200 5.600" stroke="#fff" stroke-width="1.300" fill="none"/></g></svg>
    <div class="abs" style="left:350px;top:298px;font-size:14px;color:#444;line-height:20px;white-space:nowrap">支付宝</div>
    <div class="abs" style="left:176px;top:340px;font-size:13px;color:#999;line-height:20px;white-space:nowrap">应付金额:</div>
    <div class="abs" style="left:250px;top:333px;font-size:25px;color:#f5302e;line-height:36px;white-space:nowrap">￥8</div>
    <div class="abs" style="left:299px;top:340px;width:104px;height:22px;background:#fbe4e4;border-radius:4px;color:#f23c38;font-size:14px;text-align:center;line-height:22px;white-space:nowrap">已优惠￥2.00</div>
    <div class="abs" style="left:192px;top:380px;font-size:14px;color:#7a4dff;line-height:20px;white-space:nowrap">我已阅读并同意<span style="color:#ffa200">《会员服务协议》</span></div>
    <div class="abs" style="left:607px;top:380px;font-size:13px;color:#999;line-height:20px;white-space:nowrap">剩余支付时间: <span style="color:#f5302e">09:58</span></div>
    <div class="abs" style="left:30px;top:434px;width:812px;font-size:12px;color:#a3a3a3;line-height:19px">划线价格说明：商品展示的划横线价格为参考价，并非原价，该价格可能是商品在其他售卖渠道的历史售价、活动指导价、建议售价等或其他真实有依据的价格仅供您参考。</div>
  </div>
</div>

<!-- floating widgets right -->
<div class="abs" style="left:1866px;top:780px;width:60px;height:48px;background:#fff;border-radius:8px;box-shadow:-2px 0 8px rgba(0,0,0,.12)"></div>
<div class="abs" style="left:1880px;top:666px;width:36px;height:142px;background:rgba(46,47,52,.37);border-radius:9px"></div>
<div class="abs" style="left:1884px;top:698px;width:26px;height:1px;background:rgba(130,150,160,.2)"></div>
<div class="abs" style="left:1884px;top:742px;width:26px;height:1px;background:rgba(130,150,160,.2)"></div>
<svg class="abs" style="left:1889.500px;top:673.500px" width="15" height="16" viewBox="0 0 15 16"><path d="M7.500 .8l6.300 2.100v5.600c0 3.300-2.700 5.500-6.300 6.900-3.600-1.400-6.300-3.600-6.300-6.900V2.900z" fill="#f78d14" stroke="#5a6fb0" stroke-width=".4"/><path d="M5.800 5.600l2.300-1.400v7.300" stroke="#fff" stroke-width="1.900" fill="none"/></svg>
<div class="abs" style="left:1892px;top:705px;width:10px;height:30px;border-radius:5px;background:linear-gradient(#74767a 0%,#74767a 16%,#f0802a 18%,#e8a428 40%,#d8b82a 52%,#7ccc5a 75%,#2ec4a0 92%,#22bcc0 100%)"></div>
<div class="abs" style="left:1889.500px;top:750.500px;font-size:10.500px;color:#fff;line-height:12px;white-space:nowrap">0.7</div>
<div class="abs" style="left:1895.500px;top:761.500px;font-size:9px;color:#e4e4e6;line-height:11px;white-space:nowrap">K/s</div>
<svg class="abs" style="left:1885px;top:763px" width="8" height="9" viewBox="0 0 8 9"><path d="M4 .5L7.300 4.600H4.800V8.500H3.200V4.600H.7Z" fill="#1eaaf1"/></svg>
<div class="abs" style="left:1889.500px;top:777.500px;font-size:10.500px;color:#fff;line-height:12px;white-space:nowrap">0.5</div>
<div class="abs" style="left:1895.500px;top:788.500px;font-size:9px;color:#eee;line-height:11px;white-space:nowrap">K/s</div>
<svg class="abs" style="left:1878px;top:792px" width="24" height="24" viewBox="0 0 24 24" fill="none"><circle cx="12" cy="12" r="10.600" stroke="#2a63d6" stroke-width="1.300" fill="rgba(255,255,255,.25)"/><path d="M2.500 16c2.500 3.500 6 6.300 9.500 6.300s7.500-2.500 9.500-6.300c-3 1.800-5.500 1-9.500 1s-6.500-.2-9.500-1z" fill="#3b7be8"/><path d="M12.500 3.500c4 .3 7.500 2.500 9 6-2.500-1.500-5-2.500-9-6z" fill="#2458c8"/><path d="M5.500 12.500l3-2.200 2.500 3 2.500-3.500 2.500 3 2.500-2" stroke="#2a58c8" stroke-width="1.800" stroke-linejoin="round"/><circle cx="5.500" cy="12.500" r="1.300" fill="#2a58c8"/><circle cx="18.500" cy="11" r="1.300" fill="#2a58c8"/><circle cx="12" cy="8" r="1.100" fill="#2a58c8"/><circle cx="12.500" cy="16" r="1.100" fill="#2a58c8"/></svg>
<svg class="abs" style="left:1884.500px;top:790px" width="8" height="9" viewBox="0 0 8 9"><path d="M4 8.500L7.300 4.400H4.800V.5H3.200V4.400H.7Z" fill="#1fc15a"/></svg>
</body>
</html>
